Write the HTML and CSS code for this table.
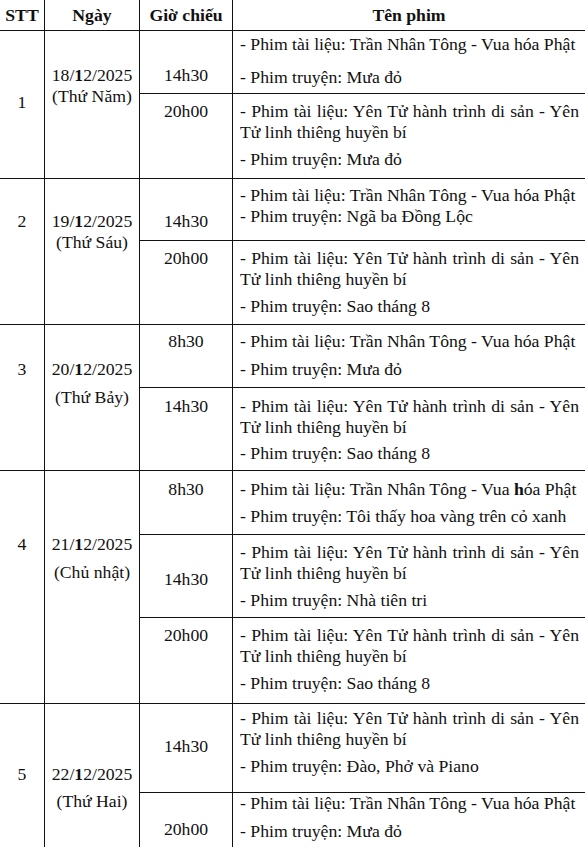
FILE: index.html
```html
<!DOCTYPE html>
<html lang="vi">
<head>
<meta charset="utf-8">
<title>Lịch chiếu phim</title>
<link rel="stylesheet" href="styles.css">
</head>
<body>
<div class="schedule">
  <div class="cell head">STT</div>
  <div class="cell head">Ngày</div>
  <div class="cell head">Giờ chiếu</div>
  <div class="cell head">Tên phim</div>

  <div class="cell c span2 pt61">1</div>
  <div class="cell c span2 pt34"><p>18/<b>1</b>2/2025</p><p>(Thứ Năm)</p></div>
  <div class="cell c pt34">14h30</div>
  <div class="cell film pt3 g12"><p class="one">- Phim tài liệu: Trần Nhân Tông - Vua hóa Phật</p><p class="one">- Phim truyện: Mưa đỏ</p></div>
  <div class="cell c pt7">20h00</div>
  <div class="cell film pt7 g6"><p>- Phim tài liệu: Yên Tử hành trình di sản - Yên Tử linh thiêng huyền bí</p><p class="one">- Phim truyện: Mưa đỏ</p></div>

  <div class="cell c span2 pt32">2</div>
  <div class="cell c span2 pt32"><p>19/<b>1</b>2/2025</p><p>(Thứ Sáu)</p></div>
  <div class="cell c pt32">14h30</div>
  <div class="cell film pt6"><p class="one">- Phim tài liệu: Trần Nhân Tông - Vua hóa Phật</p><p class="one">- Phim truyện: Ngã ba Đồng Lộc</p></div>
  <div class="cell c pt7">20h00</div>
  <div class="cell film pt7 g6"><p>- Phim tài liệu: Yên Tử hành trình di sản - Yên Tử linh thiêng huyền bí</p><p class="one">- Phim truyện: Sao tháng 8</p></div>

  <div class="cell c span2 pt34">3</div>
  <div class="cell c span2 pt34 g7"><p>20/<b>1</b>2/2025</p><p>(Thứ Bảy)</p></div>
  <div class="cell c pt6">8h30</div>
  <div class="cell film pt6 g7"><p class="one">- Phim tài liệu: Trần Nhân Tông - Vua hóa Phật</p><p class="one">- Phim truyện: Mưa đỏ</p></div>
  <div class="cell c pt8">14h30</div>
  <div class="cell film pt8 g5"><p>- Phim tài liệu: Yên Tử hành trình di sản - Yên Tử linh thiêng huyền bí</p><p class="one">- Phim truyện: Sao tháng 8</p></div>

  <div class="cell c span3 pt63">4</div>
  <div class="cell c span3 pt63 g7"><p>21/<b>1</b>2/2025</p><p>(Chủ nhật)</p></div>
  <div class="cell c pt8">8h30</div>
  <div class="cell film pt8 g6"><p class="one">- Phim tài liệu: Trần Nhân Tông - Vua <b>h</b>óa Phật</p><p class="one">- Phim truyện: Tôi thấy hoa vàng trên cỏ xanh</p></div>
  <div class="cell c pt34">14h30</div>
  <div class="cell film pt7 g6"><p>- Phim tài liệu: Yên Tử hành trình di sản - Yên Tử linh thiêng huyền bí</p><p class="one">- Phim truyện: Nhà tiên tri</p></div>
  <div class="cell c pt7">20h00</div>
  <div class="cell film pt7 g6"><p>- Phim tài liệu: Yên Tử hành trình di sản - Yên Tử linh thiêng huyền bí</p><p class="one">- Phim truyện: Sao tháng 8</p></div>

  <div class="cell c span2 pt60">5</div>
  <div class="cell c span2 pt60 g6"><p>22/<b>1</b>2/2025</p><p>(Thứ Hai)</p></div>
  <div class="cell c pt32">14h30</div>
  <div class="cell film pt4 g6"><p>- Phim tài liệu: Yên Tử hành trình di sản - Yên Tử linh thiêng huyền bí</p><p class="one">- Phim truyện: Đào, Phở và Piano</p></div>
  <div class="cell c pt26">20h00</div>
  <div class="cell film pt0 g7"><p class="one">- Phim tài liệu: Trần Nhân Tông - Vua hóa Phật</p><p class="one">- Phim truyện: Mưa đỏ</p></div>
</div>
</body>
</html>
```

FILE: styles.css
```css
html, body {
  margin: 0;
  padding: 0;
  background: #fff;
}

body {
  font-family: "Liberation Serif", "Times New Roman", serif;
  font-size: 17.7px;
  line-height: 21px;
  color: #111;
}

.schedule {
  display: grid;
  width: 585px;
  grid-template-columns: 44px 94px 92px 1fr;
  grid-template-rows: 30px 62px 84px 61px 83px 62px 82px 63px 82px 85px 88px 60px;
  gap: 1px;
  background: #111;
}

.cell {
  background: #fff;
  box-sizing: border-box;
  min-width: 0;
}

.cell p {
  margin: 0;
}

.head {
  display: flex;
  align-items: center;
  justify-content: center;
  font-weight: bold;
}

.c {
  text-align: center;
}

.film {
  padding-left: 7px;
  padding-right: 6px;
  text-align: justify;
}

.one {
  white-space: nowrap;
  text-align: left;
}

.span2 { grid-row: span 2; }
.span3 { grid-row: span 3; }

.pt0 { padding-top: 0; }
.pt3 { padding-top: 3px; }
.pt4 { padding-top: 4px; }
.pt6 { padding-top: 6px; }
.pt7 { padding-top: 7px; }
.pt8 { padding-top: 8px; }
.pt26 { padding-top: 26px; }
.pt32 { padding-top: 32px; }
.pt34 { padding-top: 34px; }
.pt60 { padding-top: 60px; }
.pt61 { padding-top: 61px; }
.pt63 { padding-top: 63px; }

.g5 p + p { margin-top: 5px; }
.g6 p + p { margin-top: 6px; }
.g7 p + p { margin-top: 7px; }
.g12 p + p { margin-top: 12px; }
```
